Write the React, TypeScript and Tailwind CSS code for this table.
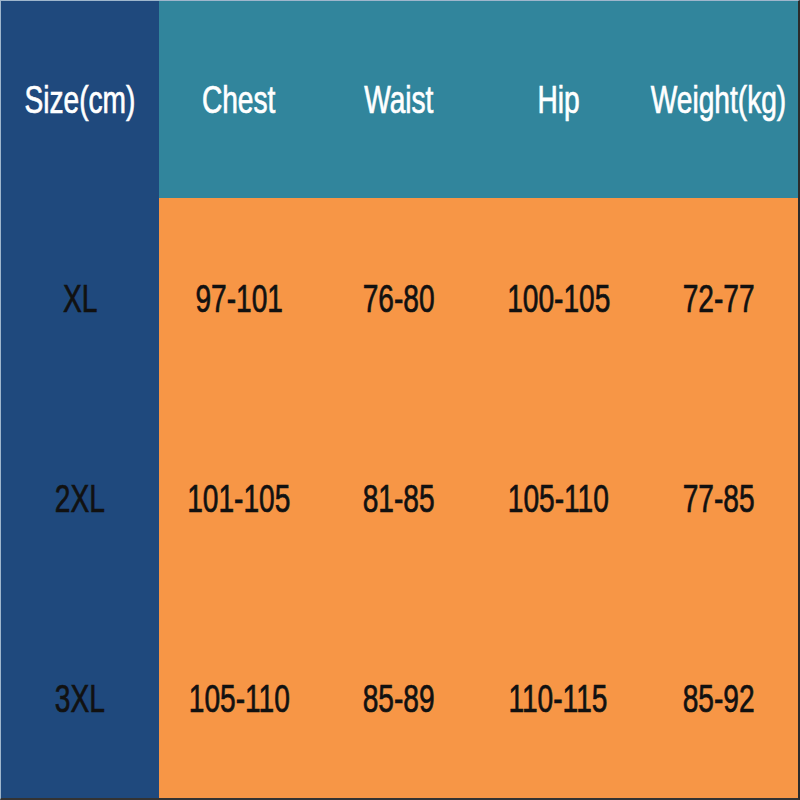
const headers = ["Chest", "Waist", "Hip", "Weight(kg)"];

const rows = [
  { size: "XL", values: ["97-101", "76-80", "100-105", "72-77"] },
  { size: "2XL", values: ["101-105", "81-85", "105-110", "77-85"] },
  { size: "3XL", values: ["105-110", "85-89", "110-115", "85-92"] },
];

function Label({ text, light }: { text: string; light?: boolean }) {
  return (
    <span
      className={`inline-block scale-x-[0.74] whitespace-nowrap text-[38px] leading-none font-['Liberation_Sans',Arial,sans-serif] [-webkit-text-stroke:0.7px] ${
        light ? "text-white" : "text-[#111111]"
      }`}
    >
      {text}
    </span>
  );
}

export default function App() {
  return (
    <div className="w-[800px] h-[800px] bg-white">
      <div className="grid h-full w-full grid-cols-[158px_repeat(4,minmax(0,1fr))] grid-rows-[197px_1fr_1fr_1fr] border-t border-l border-t-[#9fb6cc] border-l-[#9fb6cc] border-r-2 border-b-2 border-r-[#2b2b2b] border-b-[#333333]">
        {/* header row */}
        <div className="flex min-w-0 items-center justify-center bg-[#1f497d]">
          <Label text="Size(cm)" light />
        </div>
        {headers.map((h) => (
          <div key={h} className="flex min-w-0 items-center justify-center bg-[#31859c]">
            <Label text={h} light />
          </div>
        ))}

        {/* data rows */}
        {rows.map((row) => (
          <div key={row.size} className="contents">
            <div className="flex min-w-0 items-center justify-center bg-[#1f497d] pt-[2px]">
              <Label text={row.size} />
            </div>
            {row.values.map((v, i) => (
              <div key={i} className="flex min-w-0 items-center justify-center bg-[#f79646] pt-[2px]">
                <Label text={v} />
              </div>
            ))}
          </div>
        ))}
      </div>
    </div>
  );
}
